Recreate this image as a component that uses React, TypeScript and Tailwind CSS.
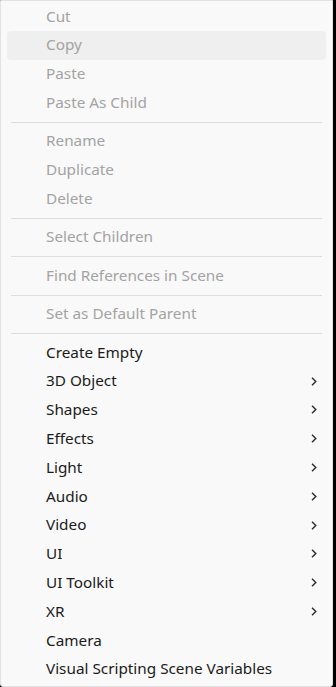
const groups: { label: string; disabled?: boolean; sub?: boolean; hover?: boolean }[][] = [
  [
    { label: 'Cut', disabled: true },
    { label: 'Copy', disabled: true, hover: true },
    { label: 'Paste', disabled: true },
    { label: 'Paste As Child', disabled: true },
  ],
  [
    { label: 'Rename', disabled: true },
    { label: 'Duplicate', disabled: true },
    { label: 'Delete', disabled: true },
  ],
  [{ label: 'Select Children', disabled: true }],
  [{ label: 'Find References in Scene', disabled: true }],
  [{ label: 'Set as Default Parent', disabled: true }],
  [
    { label: 'Create Empty' },
    { label: '3D Object', sub: true },
    { label: 'Shapes', sub: true },
    { label: 'Effects', sub: true },
    { label: 'Light', sub: true },
    { label: 'Audio', sub: true },
    { label: 'Video', sub: true },
    { label: 'UI', sub: true },
    { label: 'UI Toolkit', sub: true },
    { label: 'XR', sub: true },
    { label: 'Camera' },
    { label: 'Visual Scripting Scene Variables' },
  ],
]

function Chevron() {
  return (
    <svg width="6" height="9" viewBox="0 0 6 9" className="mr-[9px]">
      <path d="M1 0.8 L4.8 4.5 L1 8.2" fill="none" stroke="#2b2b2b" strokeWidth="1.4" />
    </svg>
  )
}

export default function App() {
  return (
    <div className="flex h-[687px] w-[336px] bg-black">
      <div
        className="flex h-full w-[333px] flex-col rounded-b-[3px] border border-[#e2e2e2] bg-[#f9f9f9] pt-[1.4px] text-[15.3px]"
        style={{ fontFamily: '"Noto Sans", "Open Sans", sans-serif' }}
      >
        {groups.map((g, gi) => (
          <div key={gi} className="flex flex-col">
            {gi > 0 && (
              <div className="flex h-[9.6px] items-center px-[10px]">
                <div className="h-px w-full bg-[#dedede]" />
              </div>
            )}
            {g.map((it) => (
              <div
                key={it.label}
                className={`mx-[6px] flex h-[28.8px] items-center justify-between rounded-[4px] pb-[1px] pl-[39px] ${
                  it.hover ? 'bg-[#efefef]' : ''
                } ${it.disabled ? 'text-[#a3a3a3]' : 'text-[#1b1b1b]'}`}
              >
                <span className="leading-none">{it.label}</span>
                {it.sub && <Chevron />}
              </div>
            ))}
          </div>
        ))}
      </div>
    </div>
  )
}
